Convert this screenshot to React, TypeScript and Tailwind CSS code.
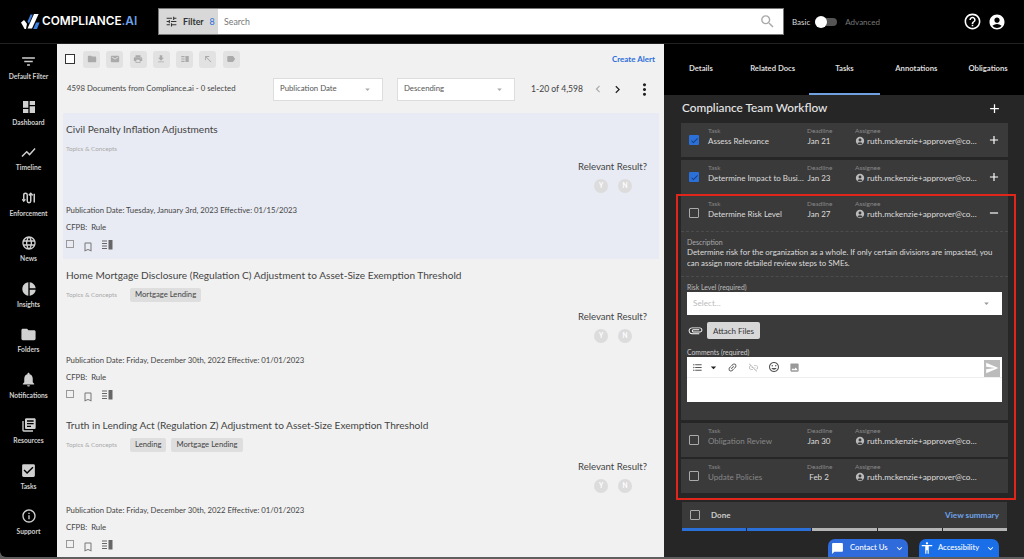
import {
  MdAccessibility,
  MdAccountCircle,
  MdAdd,
  MdArrowDropDown,
  MdAttachFile,
  MdBookmarkBorder,
  MdChatBubble,
  MdCheck,
  MdCheckBox,
  MdChevronLeft,
  MdChevronRight,
  MdDashboard,
  MdEmail,
  MdExpandMore,
  MdFileDownload,
  MdFilterList,
  MdFolder,
  MdFormatListBulleted,
  MdHelpOutline,
  MdImage,
  MdInfoOutline,
  MdInsertEmoticon,
  MdLabel,
  MdLanguage,
  MdLibraryBooks,
  MdLink,
  MdLinkOff,
  MdMoreVert,
  MdNorthWest,
  MdNotifications,
  MdPieChart,
  MdPrint,
  MdRemove,
  MdSearch,
  MdSend,
  MdShowChart,
  MdTune,
  MdVerticalSplit,
} from "react-icons/md";
import type { ReactNode } from "react";

function EnforcementIcon() {
  return (
    <svg width="14" height="14" viewBox="0 0 16 16" fill="none" stroke="currentColor" strokeWidth="1.7">
      <path d="M2 10V4.5a2 2 0 0 1 4 0v7a2 2 0 0 0 4 0V3" />
      <path d="M7.8 5 10 2.6 12.2 5" />
      <path d="M0.4 9.5 2 11.5 3.8 9.5" />
      <path d="M14 3v10" />
    </svg>
  );
}

function LogoMark() {
  return (
    <svg width="19" height="17" viewBox="0 0 19 17" className="shrink-0">
      <path d="M0 9.5 3 7l3 3.8L5 16H3.6z" fill="#fff" />
      <path d="M6.5 15.5 13 1h4.6L11 15.5z" fill="#fff" />
      <path d="M12.2 16 15 9.6h3.6L16 16z" fill="#3f7fe0" />
      <path d="M6.4 8.8 9.6 1.6h2.2L8 10.4z" fill="#3f7fe0" />
    </svg>
  );
}

function DocViewIcon() {
  return (
    <svg width="11" height="10" viewBox="0 0 11 10" fill="#666">
      <path d="M0 0.5h5v1H0zM0 3h5v1H0zM0 5.500h5v1H0zM0 8h5v1H0z" />
      <path d="M6.500 0h4v9.500h-4z" />
    </svg>
  );
}

const navItems: { label: string; icon: ReactNode }[] = [
  { label: "Default Filter", icon: <MdFilterList size={17} /> },
  { label: "Dashboard", icon: <MdDashboard size={16} /> },
  { label: "Timeline", icon: <MdShowChart size={17} /> },
  { label: "Enforcement", icon: <EnforcementIcon /> },
  { label: "News", icon: <MdLanguage size={16} /> },
  { label: "Insights", icon: <MdPieChart size={16} /> },
  { label: "Folders", icon: <MdFolder size={17} /> },
  { label: "Notifications", icon: <MdNotifications size={17} /> },
  { label: "Resources", icon: <MdLibraryBooks size={16} /> },
  { label: "Tasks", icon: <MdCheckBox size={17} /> },
  { label: "Support", icon: <MdInfoOutline size={16} /> },
];

const toolIcons = [MdFolder, MdEmail, MdPrint, MdFileDownload, MdVerticalSplit, MdNorthWest, MdLabel];

const docs = [
  {
    title: "Civil Penalty Inflation Adjustments",
    chips: [] as string[],
    date: "Tuesday, January 3rd, 2023",
    effective: "01/15/2023",
    active: true,
  },
  {
    title: "Home Mortgage Disclosure (Regulation C) Adjustment to Asset-Size Exemption Threshold",
    chips: ["Mortgage Lending"],
    date: "Friday, December 30th, 2022",
    effective: "01/01/2023",
    active: false,
  },
  {
    title: "Truth in Lending Act (Regulation Z) Adjustment to Asset-Size Exemption Threshold",
    chips: ["Lending", "Mortgage Lending"],
    date: "Friday, December 30th, 2022",
    effective: "01/01/2023",
    active: false,
  },
];

function Header() {
  return (
    <header className="flex h-[44px] shrink-0 items-center border-b border-[#222] bg-black">
      <div className="flex w-[158px] items-center gap-[2px] pl-[21px]">
        <LogoMark />
        <span className="font-['Inter',sans-serif] text-[11.800px] leading-none font-semibold text-white">
          COMPLIANCE<span className="text-[#6ea3ea]">.AI</span>
        </span>
      </div>
      <div className="flex h-[27px] w-[626px] border border-[#777] bg-white">
        <div className="flex w-[59px] items-center gap-[5px] bg-[#d8d8d8] pl-[6px] text-[#333]">
          <MdTune size={13} />
          <span className="text-[8.800px] font-bold">Filter</span>
          <span className="ml-[1px] text-[9px] text-[#2b6fd8]">8</span>
        </div>
        <span className="flex-1 self-center pl-[6px] text-[8.800px] text-[#777]">Search</span>
        <MdSearch size={17} className="mr-[7px] self-center text-[#aaa]" />
      </div>
      <span className="ml-[8px] text-[8px] text-[#ddd]">Basic</span>
      <div className="relative ml-[5px] h-[8px] w-[22px] rounded-full bg-[#555]">
        <div className="absolute top-[-2px] left-0 h-[12px] w-[12px] rounded-full bg-white" />
      </div>
      <span className="ml-[8px] text-[8px] text-[#777]">Advanced</span>
      <MdHelpOutline size={19} className="ml-[83px] text-white" />
      <MdAccountCircle size={18} className="ml-[6px] text-white" />
    </header>
  );
}

function Sidebar() {
  return (
    <nav className="flex w-[57px] shrink-0 flex-col overflow-hidden rounded-bl-[6px] bg-black pt-[7px] text-[#d0d0d0]">
      {navItems.map((item) => (
        <div key={item.label} className="flex h-[45.500px] shrink-0 flex-col items-center">
          <div className="flex h-[20px] items-center justify-center">{item.icon}</div>
          <span className="text-[6.700px] leading-[10px] font-bold whitespace-nowrap">{item.label}</span>
        </div>
      ))}
    </nav>
  );
}

function ListSelect({ label, width }: { label: string; width: string }) {
  return (
    <div className={`flex h-[23px] items-center justify-between border border-[#ddd] bg-white pr-[9px] pl-[6px] text-[7.800px] text-[#555] ${width}`}>
      {label}
      <MdArrowDropDown size={11} className="text-[#aaa]" />
    </div>
  );
}

function DocItem({ doc }: { doc: (typeof docs)[number] }) {
  const hasChips = doc.chips.length > 0;
  return (
    <div className={`flex shrink-0 flex-col pt-[8px] pl-[3px] ${doc.active ? "h-[146px] bg-[#e8ebf3]" : "h-[150px]"}`}>
      <div className="text-[10.100px] leading-[16px] text-[#444]">{doc.title}</div>
      <div className={`flex items-center gap-[13px] ${hasChips ? "mt-[4px] h-[16px]" : "mt-[6px] h-[12px]"}`}>
        <span className="text-[6.300px] text-[#aaa]">Topics &amp; Concepts</span>
        {hasChips && (
          <div className="flex gap-[5px]">
            {doc.chips.map((c) => (
              <span key={c} className="flex h-[14px] items-center rounded-[2px] bg-[#dedede] px-[5px] text-[7.700px] text-[#444]">
                {c}
              </span>
            ))}
          </div>
        )}
      </div>
      <div className={`flex flex-col items-end pr-[12px] ${hasChips ? "mt-[7px]" : "mt-[5px]"}`}>
        <span className="text-[9.600px] leading-[14px] text-[#444]">Relevant Result?</span>
        <div className="mt-[5px] mr-[15px] flex gap-[10px]">
          {["Y", "N"].map((l) => (
            <span key={l} className="flex h-[14px] w-[14px] items-center justify-center rounded-full bg-[#dcdcdc] text-[6.500px] font-bold text-white">
              {l}
            </span>
          ))}
        </div>
      </div>
      <div className="mt-[11px] text-[7.750px] leading-[12px] text-[#444]">
        Publication Date: {doc.date} Effective: {doc.effective}
      </div>
      <div className="mt-[5px] text-[7.750px] leading-[12px] text-[#444]">CFPB: &nbsp;Rule</div>
      <div className="mt-[6px] flex items-start gap-[8px] text-[#777]">
        <span className="mt-[1px] h-[8px] w-[8px] border border-[#999]" />
        <MdBookmarkBorder size={12} className="mt-[2px]" />
        <span className="mt-[1px]">
          <DocViewIcon />
        </span>
      </div>
    </div>
  );
}

function DocList() {
  return (
    <main className="flex w-[607px] shrink-0 flex-col overflow-hidden bg-[#f1f1f1] pr-[5px] pl-[6px]">
      <div className="flex h-[30px] shrink-0 items-center gap-[6px] pl-[2px]">
        <span className="h-[10px] w-[10px] border border-[#333] bg-white" />
        <div className="flex gap-[6.300px] pl-[2px]">
          {toolIcons.map((Icon, i) => (
            <span key={i} className="flex h-[17px] w-[17px] items-center justify-center rounded-[3px] bg-[#e2e2e2] text-[#aaa]">
              <Icon size={10} />
            </span>
          ))}
        </div>
        <span className="ml-auto pr-[4px] text-[8px] font-bold text-[#2b6fd8]">Create Alert</span>
      </div>
      <div className="mb-[9px] flex h-[30px] shrink-0 items-center pl-[4px] text-[#444]">
        <span className="w-[206px] shrink-0 text-[7.770px]">4598 Documents from Compliance.ai - 0 selected</span>
        <ListSelect label="Publication Date" width="w-[110px]" />
        <span className="w-[14px]" />
        <ListSelect label="Descending" width="w-[118px]" />
        <span className="ml-[16px] w-[52px] shrink-0 text-[8.600px] whitespace-nowrap">1-20 of 4,598</span>
        <MdChevronLeft size={14} className="ml-[8px] shrink-0 text-[#aaa]" />
        <MdChevronRight size={15} className="ml-[5px] shrink-0 text-[#222]" />
        <MdMoreVert size={19} className="ml-[10px] shrink-0 text-[#222]" />
      </div>
      <div className="flex flex-col">
        {docs.map((doc) => (
          <DocItem key={doc.title} doc={doc} />
        ))}
      </div>
    </main>
  );
}

function TaskHead({ name, date, done, muted, open }: { name: string; date: string; done?: boolean; muted?: boolean; open?: boolean }) {
  return (
    <div className="flex h-[34px] shrink-0 items-center pl-[8px]">
      <span className={`flex h-[10px] w-[10px] shrink-0 items-center justify-center rounded-[1px] ${done ? "bg-[#2b6fd8] text-[#143a78]" : "border border-[#aaa]"}`}>
        {done && <MdCheck size={9} />}
      </span>
      <div className="mb-[6px] ml-[9px] w-[99px] shrink-0">
        <div className="text-[6.500px] leading-[8px] text-[#888]">Task</div>
        <div className={`text-[8px] leading-[12px] whitespace-nowrap ${muted ? "text-[#888]" : "text-[#ddd]"}`}>{name}</div>
      </div>
      <div className="mb-[6px] w-[48px] shrink-0">
        <div className="text-[6.500px] leading-[8px] text-[#888]">Deadline</div>
        <div className="w-[24px] text-center text-[8px] leading-[12px] whitespace-nowrap text-[#ddd]">{date}</div>
      </div>
      <div className="mb-[6px] min-w-0 flex-1">
        <div className="text-[6.500px] leading-[8px] text-[#888]">Assignee</div>
        <div className="flex items-center gap-[2px] text-[8.270px] leading-[12px] text-[#ddd]">
          <MdAccountCircle size={10} className="shrink-0 text-[#bbb]" />
          <span className="whitespace-nowrap">ruth.mckenzie+approver@co…</span>
        </div>
      </div>
      {open ? <MdRemove size={14} className="mr-[7px] shrink-0 text-white" /> : null}
      {!open && !muted ? <MdAdd size={14} className="mr-[7px] shrink-0 text-white" /> : null}
    </div>
  );
}

function ExpandedTask() {
  return (
    <div className="mb-[3px] flex h-[224px] shrink-0 flex-col bg-[#3a3a3a]">
      <div className="h-[35px] shrink-0">
        <TaskHead name="Determine Risk Level" date="Jan 27" open />
      </div>
      <div className="flex h-[46px] shrink-0 flex-col justify-center border-y border-dashed border-[#4c4c4c] px-[6px] pb-[2px]">
        <div className="text-[7px] leading-[9px] text-[#aaa]">Description</div>
        <div className="text-[7.900px] leading-[11px] text-[#ddd]">
          Determine risk for the organization as a whole. If only certain divisions are impacted, you can assign more detailed review steps to SMEs.
        </div>
      </div>
      <div className="px-[6px] pt-[6px]">
        <div className="text-[6.800px] leading-[9px] text-[#bbb]">Risk Level (required)</div>
        <div className="flex h-[23px] items-center justify-between bg-white px-[6px] text-[8.200px] text-[#bbb]">
          Select...
          <MdArrowDropDown size={11} className="mr-[4px] text-[#999]" />
        </div>
        <div className="mt-[7px] flex items-center gap-[4px] pl-[1px]">
          <MdAttachFile size={15} className="rotate-90 text-white" />
          <span className="flex h-[17px] w-[53px] items-center justify-center rounded-[2px] bg-[#d8d8d8] text-[8px] text-[#333]">Attach Files</span>
        </div>
        <div className="mt-[9px] text-[6.800px] leading-[9px] text-[#ccc]">Comments (required)</div>
        <div className="h-[45px] bg-white">
          <div className="flex h-[21px] items-center border-b border-[#eee] pl-[5px] text-[#555]">
            <MdFormatListBulleted size={11} />
            <MdArrowDropDown size={13} className="ml-[4px] text-[#222]" />
            <MdLink size={11} className="ml-[7px] -rotate-45" />
            <MdLinkOff size={11} className="ml-[10px] text-[#bbb]" />
            <MdInsertEmoticon size={12} className="ml-[9px]" />
            <MdImage size={11} className="ml-[9px] text-[#999]" />
            <span className="mt-[2px] mr-[2px] ml-auto flex h-[17px] w-[16px] items-center justify-center bg-[#bbb] text-white">
              <MdSend size={14} />
            </span>
          </div>
        </div>
      </div>
    </div>
  );
}

function TaskRow(props: { name: string; date: string; done?: boolean; muted?: boolean; gap?: string }) {
  return (
    <div className={`bg-[#3a3a3a] ${props.gap ?? "mb-[2px]"}`}>
      <TaskHead {...props} />
    </div>
  );
}

function Workflow() {
  return (
    <div className="flex min-w-0 flex-1 flex-col bg-[#262626] pr-[16px] pl-[17px]">
      <div className="flex h-[28px] shrink-0 items-center justify-between pb-[2px] pl-[1px]">
        <span className="text-[11.800px] font-medium whitespace-nowrap text-[#e8e8e8]">Compliance Team Workflow</span>
        <MdAdd size={15} className="mr-[6px] text-white" />
      </div>
      <TaskRow name="Assess Relevance" date="Jan 21" done gap="mb-[3px]" />
      <TaskRow name="Determine Impact to Busi…" date="Jan 23" done />
      <ExpandedTask />
      <TaskRow name="Obligation Review" date="Jan 30" muted />
      <TaskRow name="Update Policies" date="Feb 2" muted />
      <div className="mx-[1px] mt-[7px] flex h-[26px] shrink-0 items-center bg-[#3a3a3a] pr-[7px] pl-[8px]">
        <span className="h-[10px] w-[10px] rounded-[1px] border border-[#aaa]" />
        <span className="ml-[11px] text-[8px] font-bold text-[#ccc]">Done</span>
        <span className="ml-auto pr-[1px] text-[8.200px] font-bold text-[#6ea3ea]">View summary</span>
      </div>
      <div className="mx-[1px] flex h-[3px] shrink-0 gap-[1px]">
        <span className="flex-1 bg-[#2b6fd8]" />
        <span className="flex-1 bg-[#2b6fd8]" />
        <span className="flex-1 bg-[#b5b5b5]" />
        <span className="flex-1 bg-[#b5b5b5]" />
        <span className="flex-1 bg-[#b5b5b5]" />
      </div>
    </div>
  );
}

function RightPanel() {
  const tabs = ["Details", "Related Docs", "Tasks", "Annotations", "Obligations"];
  return (
    <aside className="flex min-w-0 flex-1 flex-col">
      <div className="flex h-[51px] shrink-0 bg-black pl-[1px]">
        {tabs.map((t) => (
          <div key={t} className={`flex w-[71.800px] items-center justify-center text-[7.700px] font-bold whitespace-nowrap text-[#ddd] ${t === "Tasks" ? "border-b-2 border-[#6fa0e0]" : "pb-[2px]"}`}>
            {t}
          </div>
        ))}
      </div>
      <Workflow />
    </aside>
  );
}

export default function App() {
  return (
    <div className="relative flex h-[559px] w-[1024px] flex-col overflow-hidden bg-[#5f5f5f] font-['Lato',sans-serif]">
      <Header />
      <div className="flex min-h-0 flex-1 pb-[2px]">
        <Sidebar />
        <DocList />
        <RightPanel />
      </div>
      {/* annotation box drawn over the task list */}
      <div className="pointer-events-none absolute top-[194px] left-[676px] h-[306px] w-[340px] border-2 border-[#e0261a]" />
      <div className="absolute top-[539px] left-[828px] flex h-[18px] w-[80px] items-center gap-[6px] rounded-t-[7px] bg-[#2f6bdb] pl-[3px] text-[7.700px] font-medium whitespace-nowrap text-white">
        <MdChatBubble size={13} />
        Contact Us
        <MdExpandMore size={11} className="mr-[3px] ml-auto" />
      </div>
      <div className="absolute top-[539px] left-[919px] flex h-[18px] w-[80px] items-center gap-[4px] rounded-t-[7px] bg-[#1a6fe8] pl-[1px] text-[7.600px] font-medium whitespace-nowrap text-white">
        <MdAccessibility size={14} />
        Accessibility
        <MdExpandMore size={11} className="mr-[3px] ml-auto" />
      </div>
    </div>
  );
}
